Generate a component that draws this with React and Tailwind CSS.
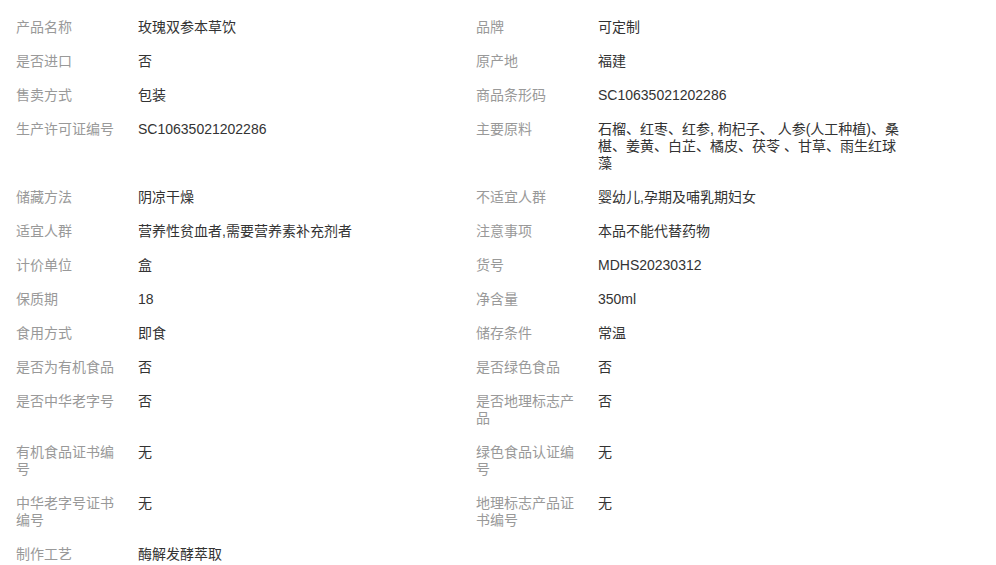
const rows = [
  [['产品名称', '玫瑰双参本草饮'], ['品牌', '可定制']],
  [['是否进口', '否'], ['原产地', '福建']],
  [['售卖方式', '包装'], ['商品条形码', 'SC10635021202286']],
  [
    ['生产许可证编号', 'SC10635021202286'],
    ['主要原料', '石榴、红枣、红参, 枸杞子、 人参(人工种植)、桑椹、姜黄、白芷、橘皮、茯苓 、甘草、雨生红球藻'],
  ],
  [['储藏方法', '阴凉干燥'], ['不适宜人群', '婴幼儿,孕期及哺乳期妇女']],
  [['适宜人群', '营养性贫血者,需要营养素补充剂者'], ['注意事项', '本品不能代替药物']],
  [['计价单位', '盒'], ['货号', 'MDHS20230312']],
  [['保质期', '18'], ['净含量', '350ml']],
  [['食用方式', '即食'], ['储存条件', '常温']],
  [['是否为有机食品', '否'], ['是否绿色食品', '否']],
  [['是否中华老字号', '否'], ['是否地理标志产品', '否']],
  [['有机食品证书编号', '无'], ['绿色食品认证编号', '无']],
  [['中华老字号证书编号', '无'], ['地理标志产品证书编号', '无']],
  [['制作工艺', '酶解发酵萃取']],
];

function Cell({ label, value }) {
  return (
    <div className="flex w-[460px] pt-[9px] pb-[8px]">
      <div className="w-[122px] shrink-0 pr-[16px] text-[#999999]">{label}</div>
      <div className="w-[302px] text-[#333333]">{value}</div>
    </div>
  );
}

export default function App() {
  return (
    <div className="bg-white min-h-[565px] pl-[16px] pt-[10px] text-[14px] leading-[17px] font-['Liberation_Sans','Noto_Sans_CJK_SC',sans-serif]">
      {rows.map((row, i) => (
        <div key={i} className="flex">
          {row.map(([label, value]) => (
            <Cell key={label} label={label} value={value} />
          ))}
        </div>
      ))}
    </div>
  );
}
